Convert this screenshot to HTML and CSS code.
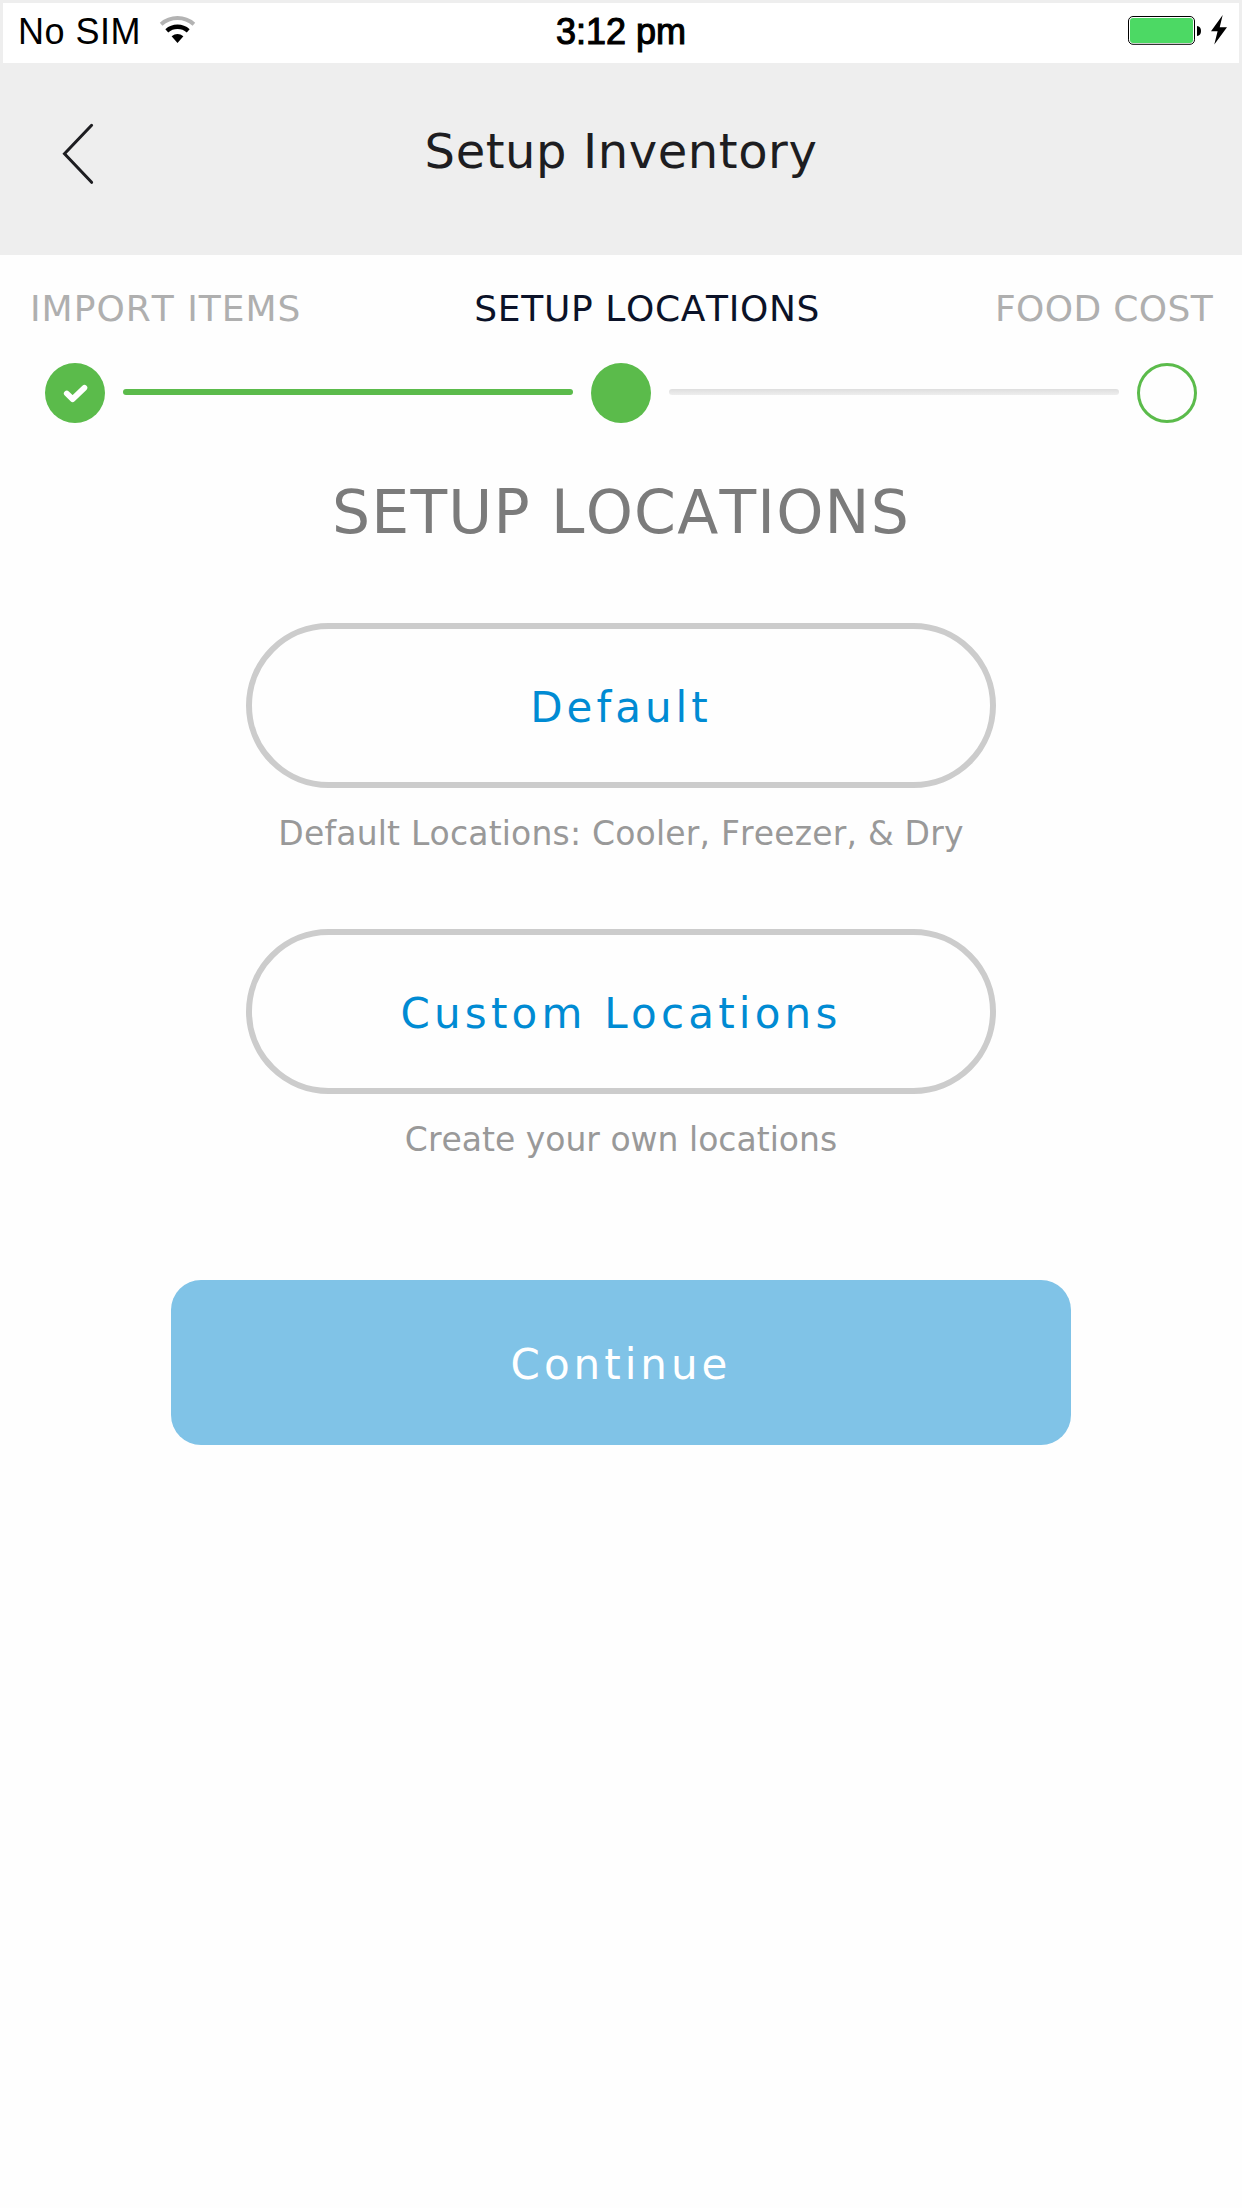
FILE: index.html
```html
<!DOCTYPE html>
<html lang="en">
<head>
<meta charset="utf-8">
<title>Setup Inventory</title>
<link rel="stylesheet" href="styles.css">
</head>
<body>
<div class="status-bar">
  <div class="carrier"><span class="carrier-name">No SIM</span>
    <svg class="wifi" width="38" height="30" viewBox="158 15 38 30">
      <path d="M161.1 24.2A25 25 0 0 1 193.9 24.2" fill="none" stroke="#b3b3b3" stroke-width="4"/>
      <path d="M166.8 30.8A16.3 16.3 0 0 1 188.2 30.8" fill="none" stroke="#000" stroke-width="4.4"/>
      <path d="M177.5 43L171.6 36.3Q177.5 31.5 183.4 36.3Z"/>
    </svg>
  </div>
  <span class="clock">3:12 pm</span>
  <svg class="battery" width="101" height="32" viewBox="1127 14 101 32">
    <rect x="1128.5" y="16.5" width="66" height="27.8" rx="4.5" fill="#fff" stroke="#000"/>
    <rect x="1130" y="18" width="63" height="25" rx="3" fill="#4cd964"/>
    <path d="M1197 26Q1201 26.5 1201 31Q1201 35.5 1197 36Z"/>
    <path d="M1222.7 15L1211 31.2L1217.6 31.2L1214.3 44.6L1227 27.2L1219.7 27.2Z"/>
  </svg>
</div>
<header class="header">
  <svg class="back" width="32" height="62" viewBox="62 123 32 62"><path d="M91.6 125.3L64.5 153.7L91.6 182.3"/></svg>
  <h1 class="title">Setup Inventory</h1>
</header>
<main>
  <div class="labels">
    <span class="label-import">IMPORT ITEMS</span>
    <span class="label-locations">SETUP LOCATIONS</span>
    <span class="label-cost">FOOD COST</span>
  </div>
  <div class="progress">
    <div class="step done"><svg width="60" height="60" viewBox="0 0 60 60"><path d="M21.8 30.5L27.6 36.1L39.4 24.8"/></svg></div>
    <div class="line done"></div>
    <div class="step done"></div>
    <div class="line todo"></div>
    <div class="step todo"></div>
  </div>
  <h2 class="heading">SETUP LOCATIONS</h2>
  <button class="option">Default</button>
  <p class="caption caption-default">Default Locations: Cooler, Freezer, &amp; Dry</p>
  <button class="option option-custom">Custom Locations</button>
  <p class="caption">Create your own locations</p>
  <button class="continue">Continue</button>
</main>
</body>
</html>
```
FILE: styles.css
```css
* { box-sizing: border-box; }
body {
  margin: 0;
  min-height: 2208px;
  background: #fefefe;
  font-family: "DejaVu Sans", Verdana, sans-serif;
  font-kerning: none;
}
h1, h2, p { margin: 0; font-weight: 400; }
button { font-family: inherit; padding: 0; display: block; }
.status-bar {
  height: 63px;
  border: 3px solid #eee;
  border-bottom: 0;
  background: #fff;
  display: grid;
  grid-template-columns: 1fr auto 1fr;
  font-family: "Liberation Sans", Arial, sans-serif;
  font-size: 36px;
  line-height: 57px;
}
.carrier { display: flex; padding-left: 15px; }
.carrier-name { letter-spacing: 0.5px; }
.wifi { margin: 12px 0 0 17px; }
.clock { -webkit-text-stroke: 1.1px #000; }
.battery { justify-self: end; margin: 11px 11px 0 0; }
.header {
  height: 192px;
  background: #eee;
  padding: 60px 62px 0;
  display: grid;
  grid-template-columns: 32px 1fr 32px;
}
.back path { fill: none; stroke: #1d1d21; stroke-width: 3; stroke-linecap: round; }
.title { color: #1d1d21; font-size: 48px; line-height: 56px; letter-spacing: 0.57px; text-align: center; }
.labels {
  display: flex;
  justify-content: space-between;
  padding: 32px 29px 0 30px;
  font-size: 36px;
  line-height: 44px;
  color: #afafaf;
}
.label-import { letter-spacing: 1px; }
.label-locations { color: #0b1228; letter-spacing: 0.65px; margin-right: 2px; }
.label-cost { letter-spacing: 0.35px; }
.progress { display: flex; align-items: center; gap: 18px; margin: 32px 45px 0; }
.step { width: 60px; height: 60px; border-radius: 50%; flex: none; }
.step.todo { border: 3px solid #5bbb4b; }
.done { background: #5bbb4b; }
.step svg { display: block; }
.step path { fill: none; stroke: #fff; stroke-width: 5.8; stroke-linecap: round; stroke-linejoin: round; }
.line { flex: 1; height: 6px; margin-bottom: 2px; border-radius: 3px; }
.line.todo { background: linear-gradient(#dedede, #eee); }
.heading { margin-top: 53px; font-size: 60px; line-height: 72px; letter-spacing: 1.2px; text-align: center; color: #7b7b7b; }
.option {
  width: 750px;
  height: 165px;
  margin: 75px auto 0;
  padding-top: 4px;
  border: 6px solid #ccc;
  border-radius: 83px;
  background: none;
  color: #008bd3;
  font-size: 42px;
  letter-spacing: 4px;
}
.caption { margin-top: 25px; font-size: 33px; line-height: 42px; text-align: center; color: #999; }
.caption-default { letter-spacing: 0.19px; }
.option-custom { margin-top: 74px; letter-spacing: 4.2px; }
.continue {
  width: 900px;
  height: 165px;
  margin: 119px auto 0;
  padding-top: 4px;
  border: 0;
  border-radius: 30px;
  background: #80c3e7;
  color: #fff;
  font-size: 42px;
  letter-spacing: 4px;
}
```
